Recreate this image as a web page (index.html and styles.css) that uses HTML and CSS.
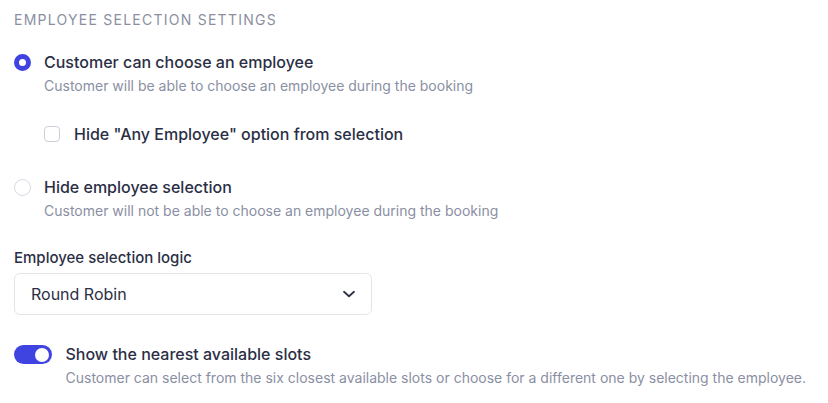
FILE: index.html
```html
<!DOCTYPE html>
<html lang="en">
<head>
<meta charset="utf-8">
<title>Employee selection settings</title>
<link rel="stylesheet" href="styles.css">
</head>
<body>
<div class="settings">
  <div class="heading">EMPLOYEE SELECTION SETTINGS</div>

  <div class="option option-first">
    <span class="radio radio-on"></span>
    <div class="option-body">
      <div class="label">Customer can choose an employee</div>
      <div class="desc">Customer will be able to choose an employee during the booking</div>
    </div>
  </div>

  <div class="check-row">
    <span class="checkbox"></span>
    <span class="label">Hide "Any Employee" option from selection</span>
  </div>

  <div class="option option-second">
    <span class="radio"></span>
    <div class="option-body">
      <div class="label">Hide employee selection</div>
      <div class="desc">Customer will not be able to choose an employee during the booking</div>
    </div>
  </div>

  <div class="field">
    <div class="field-label">Employee selection logic</div>
    <div class="select">
      <span class="select-value">Round Robin</span>
      <svg class="chevron" width="14" height="8" viewBox="0 0 14 8"><path d="M2 1.8 L7 6.2 L12 1.8" fill="none" stroke="#2d3148" stroke-width="1.8" stroke-linecap="round" stroke-linejoin="round"/></svg>
    </div>
  </div>

  <div class="toggle-row">
    <span class="toggle"><span class="knob"></span></span>
    <div class="option-body">
      <div class="label">Show the nearest available slots</div>
      <div class="desc">Customer can select from the six closest available slots or choose for a different one by selecting the employee.</div>
    </div>
  </div>
</div>
</body>
</html>
```
FILE: styles.css
```css
* { box-sizing: border-box; }
html, body { margin: 0; padding: 0; background: #ffffff; }
body {
  font-family: Inter, "Noto Sans", "Liberation Sans", sans-serif;
  color: #2d3148;
}
.settings {
  padding: 12px 14px 0 14px;
  display: flex;
  flex-direction: column;
}
.heading {
  font-size: 14px;
  line-height: 16px;
  letter-spacing: 1.25px;
  color: #8b90a0;
  font-weight: 400;
}
.option {
  display: flex;
  align-items: flex-start;
  gap: 13px;
}
.option-first { margin-top: 22px; }
.option-second { margin-top: 29px; }
.option-body { display: flex; flex-direction: column; }
.label {
  font-size: 16px;
  line-height: 24px;
  font-weight: 450;
  color: #2b2f45;
}
.desc {
  font-size: 14px;
  line-height: 24px;
  color: #8a8fa3;
}
.radio {
  flex: none;
  width: 17px;
  height: 17px;
  margin-top: 4px;
  border-radius: 50%;
  border: 1.5px solid #d5d8df;
  background: #fff;
}
.radio-on {
  border: 5.5px solid #3f43e0;
  background: #fff;
}
.check-row {
  margin-top: 24px;
  padding-left: 30px;
  display: flex;
  align-items: center;
  gap: 14px;
  height: 24px;
}
.checkbox {
  flex: none;
  width: 16px;
  height: 16px;
  border: 1.5px solid #cbcfd8;
  border-radius: 4px;
  background: #fff;
}
.field { margin-top: 25px; display: flex; flex-direction: column; }
.field-label {
  font-size: 15px;
  line-height: 20px;
  font-weight: 450;
  color: #2b2f45;
}
.select {
  margin-top: 5px;
  width: 358px;
  height: 42px;
  border: 1px solid #e3e5ea;
  border-radius: 6px;
  display: flex;
  align-items: center;
  justify-content: space-between;
  padding: 0 15px 0 16px;
}
.select-value {
  font-size: 16px;
  color: #2b2f45;
}
.chevron { display: block; }
.toggle-row {
  margin-top: 27px;
  display: flex;
  align-items: flex-start;
  gap: 14px;
}
.toggle {
  flex: none;
  width: 38px;
  height: 19px;
  margin-top: 3px;
  margin-left: -0.5px;
  border-radius: 10px;
  background: #3f43e0;
  display: flex;
  align-items: center;
  justify-content: flex-end;
  padding-right: 3px;
}
.knob {
  width: 14px;
  height: 14px;
  border-radius: 50%;
  background: #fff;
}
```
